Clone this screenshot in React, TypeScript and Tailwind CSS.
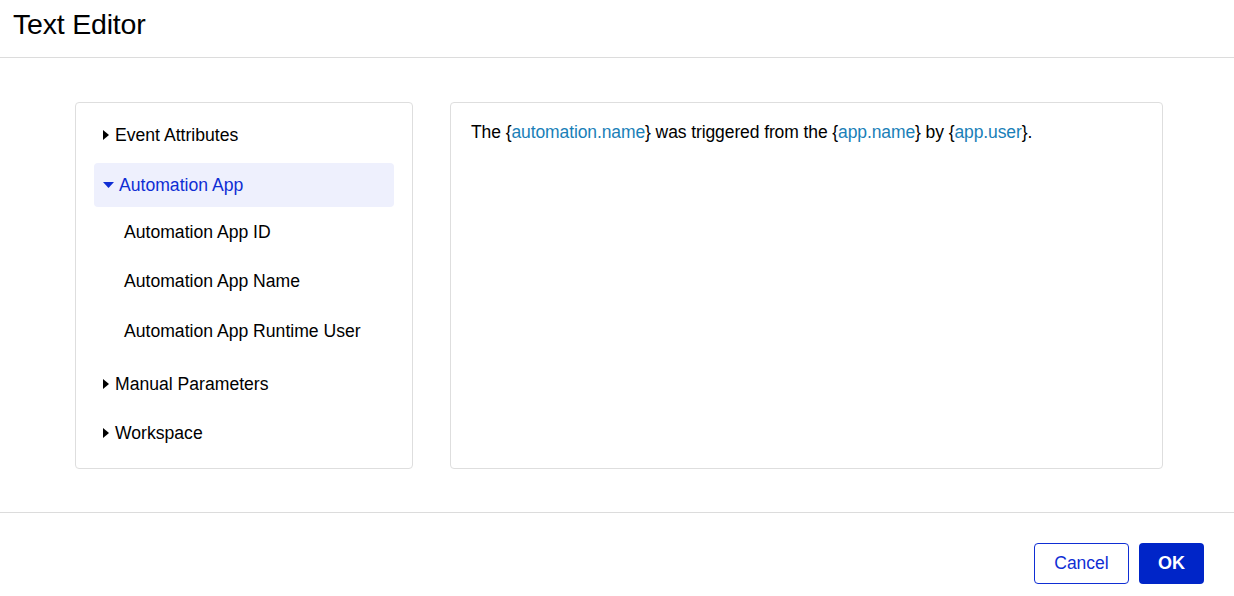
import React, { useState } from 'react';

type Node = {
  label: string;
  children?: string[];
};

const tree: Node[] = [
  { label: 'Event Attributes', children: [] },
  {
    label: 'Automation App',
    children: ['Automation App ID', 'Automation App Name', 'Automation App Runtime User'],
  },
  { label: 'Manual Parameters', children: [] },
  { label: 'Workspace', children: [] },
];

// spacing between top-level rows, taken from the screenshot
const rowGap: Record<string, string> = {
  'Event Attributes': 'mt-0',
  'Automation App': 'mt-[6px]',
  'Manual Parameters': 'mt-[10px]',
  Workspace: 'mt-[5px]',
};

const CaretRight = () => (
  <svg width="6" height="10" viewBox="0 0 6 10" className="shrink-0">
    <path d="M0 0 L6 5 L0 10 Z" fill="currentColor" />
  </svg>
);

const CaretDown = () => (
  <svg width="11" height="6" viewBox="0 0 11 6" className="shrink-0">
    <path d="M0 0 L11 0 L5.5 6 Z" fill="currentColor" />
  </svg>
);

const Token = ({ children }: { children: React.ReactNode }) => (
  <>
    {'{'}
    <span className="text-[#1a7fb8]">{children}</span>
    {'}'}
  </>
);

const App = () => {
  const [open, setOpen] = useState<string>('Automation App');

  return (
    <div className="h-[596px] w-[1234px] bg-white text-black flex flex-col font-['Liberation_Sans',Arial,sans-serif]">
      <div className="h-[58px] border-b border-[#dcdcdc] flex items-center px-[13px] shrink-0">
        <h1 className="text-[28.5px] leading-none -mt-[8px] tracking-[-0.2px]">Text Editor</h1>
      </div>

      <div className="h-[454px] shrink-0 flex gap-[37px] pl-[75px] pt-[44px]">
        <div className="w-[338px] h-[367px] shrink-0 border border-[#dedede] rounded-[4px] px-[18px] pt-[10px] flex flex-col">
          {tree.map((node) => {
            const isOpen = open === node.label;
            return (
              <React.Fragment key={node.label}>
                <button
                  onClick={() => setOpen(isOpen ? '' : node.label)}
                  className={`${rowGap[node.label]} h-[44px] shrink-0 flex items-center gap-[6px] px-[9px] rounded-[4px] text-[17.6px] text-left ${
                    isOpen ? 'bg-[#eef0fd] text-[#0f2ed4]' : 'text-black'
                  }`}
                >
                  <span className="w-[11px] flex justify-start">
                    {isOpen ? <CaretDown /> : <CaretRight />}
                  </span>
                  <span className={isOpen ? '-ml-[1px]' : '-ml-[5px]'}>{node.label}</span>
                </button>
                {isOpen && (
                  <div className="mt-[3px] flex flex-col gap-[5px]">
                    {node.children?.map((child, i) => (
                      <div
                        key={child}
                        className={`h-[44px] flex items-center pl-[30px] text-[17.6px] ${i === 2 ? 'pt-[2px]' : ''}`}
                      >
                        {child}
                      </div>
                    ))}
                  </div>
                )}
              </React.Fragment>
            );
          })}
        </div>

        <div className="w-[713px] h-[367px] shrink-0 border border-[#dedede] rounded-[4px] px-[20px] pt-[19px]">
          <p className="text-[17.5px] leading-[20px] tracking-[-0.1px]">
            The <Token>automation.name</Token> was triggered from the <Token>app.name</Token> by{' '}
            <Token>app.user</Token>.
          </p>
        </div>
      </div>

      <div className="h-[84px] border-t border-[#dcdcdc] flex justify-end items-start pt-[30px] pr-[30px] gap-[10px] shrink-0">
        <button className="h-[41px] w-[95px] border border-[#0f2ed4] rounded-[4px] text-[#0f2ed4] text-[17.5px]">
          Cancel
        </button>
        <button className="h-[41px] w-[65px] bg-[#0025c8] rounded-[4px] text-white text-[18px] font-bold">
          OK
        </button>
      </div>
    </div>
  );
};

export default App;
